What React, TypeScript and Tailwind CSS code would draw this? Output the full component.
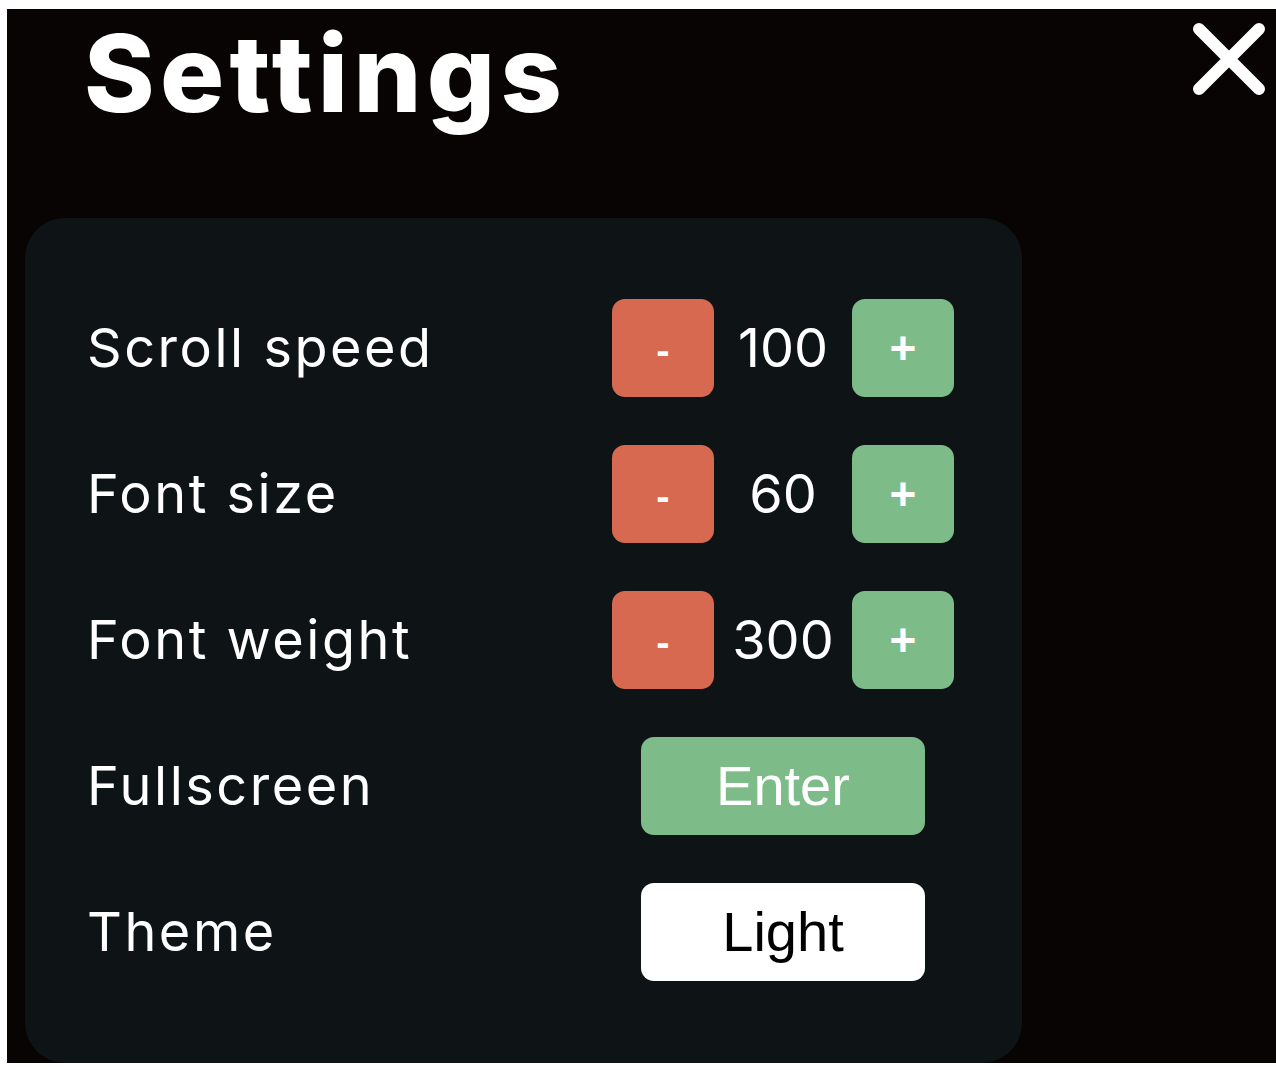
import React, { useState } from "react";

const labelFont = { fontFamily: "Inter, 'Noto Sans', sans-serif" };

function Stepper({ value, onDec, onInc }: { value: number; onDec: () => void; onInc: () => void }) {
  return (
    <div className="flex items-center">
      <button
        onClick={onDec}
        className="w-[102px] h-[98px] rounded-[13px] bg-[#d6694f] text-white text-[40px] font-bold font-['Liberation_Sans',Arial,sans-serif] flex items-center justify-center pt-[4px]"
      >
        -
      </button>
      <span className="w-[138px] text-center text-white text-[54px] leading-none" style={labelFont}>
        {value}
      </span>
      <button
        onClick={onInc}
        className="w-[102px] h-[98px] rounded-[13px] bg-[#7dbc89] text-white text-[46px] font-bold font-['Liberation_Sans',Arial,sans-serif] flex items-center justify-center"
      >
        +
      </button>
    </div>
  );
}

function Row({ label, children }: { label: string; children: React.ReactNode }) {
  return (
    <div className="flex items-center h-[98px]">
      <span className="flex-1 text-white text-[54px] leading-none tracking-[0.047em]" style={labelFont}>
        {label}
      </span>
      <div className="w-[342px] flex justify-center">{children}</div>
    </div>
  );
}

export default function App() {
  const [speed, setSpeed] = useState(100);
  const [size, setSize] = useState(60);
  const [weight, setWeight] = useState(300);
  const [light, setLight] = useState(false);

  return (
    <div className="h-[1070px] bg-white pt-[9px] pl-[7px] pb-[7px]">
      <div className="h-full bg-[#070403] pl-[18px] flex flex-col">
        <div className="flex items-start justify-between">
          <h1
            className="mt-[11px] ml-[59px] text-white text-[107px] font-extrabold leading-none tracking-[0.05em]"
            style={labelFont}
          >
            Settings
          </h1>
          <button className="mt-[14px] mr-[11px] w-[72px] h-[72px]">
            <svg viewBox="0 0 72 72" width="72" height="72">
              <path d="M6 6 L66 66 M66 6 L6 66" stroke="white" strokeWidth="12" strokeLinecap="round" />
            </svg>
          </button>
        </div>
        <div className="mt-auto w-[997px] rounded-[40px] bg-[#0e1416] pl-[62px] pr-[68px] pt-[81px] pb-[82px] flex flex-col gap-[48px]">
          <Row label="Scroll speed">
            <Stepper value={speed} onDec={() => setSpeed(speed - 10)} onInc={() => setSpeed(speed + 10)} />
          </Row>
          <Row label="Font size">
            <Stepper value={size} onDec={() => setSize(size - 2)} onInc={() => setSize(size + 2)} />
          </Row>
          <Row label="Font weight">
            <Stepper value={weight} onDec={() => setWeight(weight - 100)} onInc={() => setWeight(weight + 100)} />
          </Row>
          <Row label="Fullscreen">
            <button className="w-[284px] h-[98px] rounded-[13px] bg-[#7dbc89] text-white text-[56px] font-['Liberation_Sans',Arial,sans-serif]">
              Enter
            </button>
          </Row>
          <Row label="Theme">
            <button
              onClick={() => setLight(!light)}
              className="w-[284px] h-[98px] rounded-[13px] bg-white text-black text-[56px] font-['Liberation_Sans',Arial,sans-serif]"
            >
              {light ? "Dark" : "Light"}
            </button>
          </Row>
        </div>
      </div>
    </div>
  );
}
